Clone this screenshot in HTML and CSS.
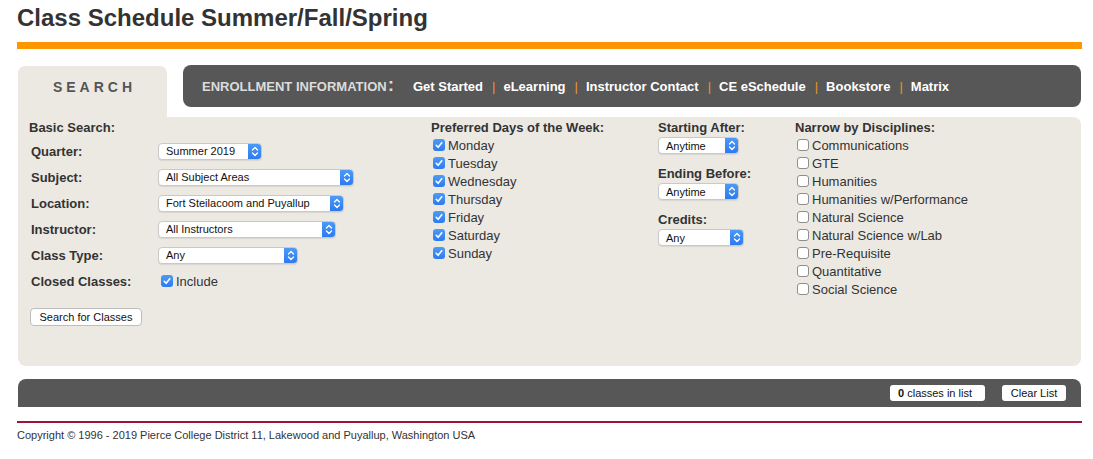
FILE: index.html
```html
<!DOCTYPE html>
<html lang="en">
<head>
<meta charset="utf-8">
<title>Class Schedule</title>
<link rel="stylesheet" href="styles.css">
</head>
<body>
<div class="page">
  <h1 class="title">Class Schedule Summer/Fall/Spring</h1>
  <div class="rule-orange"></div>

  <div class="tabs">
    <div class="tab-search">SEARCH</div>
    <nav class="enroll">
      <span class="enroll-label">ENROLLMENT INFORMATION<span class="colon">:</span></span>
      <a class="nav-link">Get Started</a><span class="sep">|</span>
      <a class="nav-link">eLearning</a><span class="sep">|</span>
      <a class="nav-link">Instructor Contact</a><span class="sep">|</span>
      <a class="nav-link">CE eSchedule</a><span class="sep">|</span>
      <a class="nav-link">Bookstore</a><span class="sep">|</span>
      <a class="nav-link">Matrix</a>
    </nav>
  </div>

  <div class="panel">
    <div class="col col-basic">
      <div class="heading heading-basic">Basic Search:</div>
      <div class="form-grid">
        <div class="label">Quarter:</div>
        <div class="select w-quarter"><span class="sel-text">Summer 2019</span><span class="stepper"><svg width="8" height="11" viewBox="0 0 8 11"><path d="M1.5 4 L4 1.5 L6.5 4 M1.5 7 L4 9.5 L6.5 7" fill="none" stroke="#fff" stroke-width="1.3" stroke-linecap="round" stroke-linejoin="round"/></svg></span></div>

        <div class="label">Subject:</div>
        <div class="select w-subject"><span class="sel-text">All Subject Areas</span><span class="stepper"><svg width="8" height="11" viewBox="0 0 8 11"><path d="M1.5 4 L4 1.5 L6.5 4 M1.5 7 L4 9.5 L6.5 7" fill="none" stroke="#fff" stroke-width="1.3" stroke-linecap="round" stroke-linejoin="round"/></svg></span></div>

        <div class="label">Location:</div>
        <div class="select w-location"><span class="sel-text">Fort Steilacoom and Puyallup</span><span class="stepper"><svg width="8" height="11" viewBox="0 0 8 11"><path d="M1.5 4 L4 1.5 L6.5 4 M1.5 7 L4 9.5 L6.5 7" fill="none" stroke="#fff" stroke-width="1.3" stroke-linecap="round" stroke-linejoin="round"/></svg></span></div>

        <div class="label">Instructor:</div>
        <div class="select w-instructor"><span class="sel-text">All Instructors</span><span class="stepper"><svg width="8" height="11" viewBox="0 0 8 11"><path d="M1.5 4 L4 1.5 L6.5 4 M1.5 7 L4 9.5 L6.5 7" fill="none" stroke="#fff" stroke-width="1.3" stroke-linecap="round" stroke-linejoin="round"/></svg></span></div>

        <div class="label">Class Type:</div>
        <div class="select w-type"><span class="sel-text">Any</span><span class="stepper"><svg width="8" height="11" viewBox="0 0 8 11"><path d="M1.5 4 L4 1.5 L6.5 4 M1.5 7 L4 9.5 L6.5 7" fill="none" stroke="#fff" stroke-width="1.3" stroke-linecap="round" stroke-linejoin="round"/></svg></span></div>

        <div class="label">Closed Classes:</div>
        <div class="check-row check-include"><span class="cb checked"><svg width="12" height="12" viewBox="0 0 12 12"><path d="M3.2 6.3 L5.1 8.3 L8.8 3.8" fill="none" stroke="#fff" stroke-width="1.6" stroke-linecap="round" stroke-linejoin="round"/></svg></span><span>Include</span></div>
      </div>
      <button class="btn-search">Search for Classes</button>
    </div>

    <div class="col col-days">
      <div class="heading">Preferred Days of the Week:</div>
      <div class="check-row"><span class="cb checked"><svg width="12" height="12" viewBox="0 0 12 12"><path d="M3.2 6.3 L5.1 8.3 L8.8 3.8" fill="none" stroke="#fff" stroke-width="1.6" stroke-linecap="round" stroke-linejoin="round"/></svg></span><span>Monday</span></div>
      <div class="check-row"><span class="cb checked"><svg width="12" height="12" viewBox="0 0 12 12"><path d="M3.2 6.3 L5.1 8.3 L8.8 3.8" fill="none" stroke="#fff" stroke-width="1.6" stroke-linecap="round" stroke-linejoin="round"/></svg></span><span>Tuesday</span></div>
      <div class="check-row"><span class="cb checked"><svg width="12" height="12" viewBox="0 0 12 12"><path d="M3.2 6.3 L5.1 8.3 L8.8 3.8" fill="none" stroke="#fff" stroke-width="1.6" stroke-linecap="round" stroke-linejoin="round"/></svg></span><span>Wednesday</span></div>
      <div class="check-row"><span class="cb checked"><svg width="12" height="12" viewBox="0 0 12 12"><path d="M3.2 6.3 L5.1 8.3 L8.8 3.8" fill="none" stroke="#fff" stroke-width="1.6" stroke-linecap="round" stroke-linejoin="round"/></svg></span><span>Thursday</span></div>
      <div class="check-row"><span class="cb checked"><svg width="12" height="12" viewBox="0 0 12 12"><path d="M3.2 6.3 L5.1 8.3 L8.8 3.8" fill="none" stroke="#fff" stroke-width="1.6" stroke-linecap="round" stroke-linejoin="round"/></svg></span><span>Friday</span></div>
      <div class="check-row"><span class="cb checked"><svg width="12" height="12" viewBox="0 0 12 12"><path d="M3.2 6.3 L5.1 8.3 L8.8 3.8" fill="none" stroke="#fff" stroke-width="1.6" stroke-linecap="round" stroke-linejoin="round"/></svg></span><span>Saturday</span></div>
      <div class="check-row"><span class="cb checked"><svg width="12" height="12" viewBox="0 0 12 12"><path d="M3.2 6.3 L5.1 8.3 L8.8 3.8" fill="none" stroke="#fff" stroke-width="1.6" stroke-linecap="round" stroke-linejoin="round"/></svg></span><span>Sunday</span></div>
    </div>

    <div class="col col-time">
      <div class="heading">Starting After:</div>
      <div class="select w-time"><span class="sel-text">Anytime</span><span class="stepper"><svg width="8" height="11" viewBox="0 0 8 11"><path d="M1.5 4 L4 1.5 L6.5 4 M1.5 7 L4 9.5 L6.5 7" fill="none" stroke="#fff" stroke-width="1.3" stroke-linecap="round" stroke-linejoin="round"/></svg></span></div>
      <div class="heading">Ending Before:</div>
      <div class="select w-time"><span class="sel-text">Anytime</span><span class="stepper"><svg width="8" height="11" viewBox="0 0 8 11"><path d="M1.5 4 L4 1.5 L6.5 4 M1.5 7 L4 9.5 L6.5 7" fill="none" stroke="#fff" stroke-width="1.3" stroke-linecap="round" stroke-linejoin="round"/></svg></span></div>
      <div class="heading">Credits:</div>
      <div class="select w-credits"><span class="sel-text">Any</span><span class="stepper"><svg width="8" height="11" viewBox="0 0 8 11"><path d="M1.5 4 L4 1.5 L6.5 4 M1.5 7 L4 9.5 L6.5 7" fill="none" stroke="#fff" stroke-width="1.3" stroke-linecap="round" stroke-linejoin="round"/></svg></span></div>
    </div>

    <div class="col col-disc">
      <div class="heading">Narrow by Disciplines:</div>
      <div class="check-row"><span class="cb"></span><span>Communications</span></div>
      <div class="check-row"><span class="cb"></span><span>GTE</span></div>
      <div class="check-row"><span class="cb"></span><span>Humanities</span></div>
      <div class="check-row"><span class="cb"></span><span>Humanities w/Performance</span></div>
      <div class="check-row"><span class="cb"></span><span>Natural Science</span></div>
      <div class="check-row"><span class="cb"></span><span>Natural Science w/Lab</span></div>
      <div class="check-row"><span class="cb"></span><span>Pre-Requisite</span></div>
      <div class="check-row"><span class="cb"></span><span>Quantitative</span></div>
      <div class="check-row"><span class="cb"></span><span>Social Science</span></div>
    </div>
  </div>

  <div class="listbar">
    <span class="pill pill-count"><b>0</b> classes in list</span>
    <span class="pill pill-clear">Clear List</span>
  </div>

  <div class="rule-red"></div>
  <p class="copyright">Copyright © 1996 - 2019 Pierce College District 11, Lakewood and Puyallup, Washington USA</p>
</div>
</body>
</html>
```

FILE: styles.css
```css
* { box-sizing: border-box; }

body {
  margin: 0;
  background: #fff;
  font-family: "Liberation Sans", Arial, sans-serif;
  color: #333;
}

.page {
  margin-left: 17px;
  width: 1065px;
}

.title {
  margin: 4px 0 0 0;
  font-size: 24px;
  line-height: 28px;
  font-weight: bold;
  color: #333;
}

.rule-orange {
  margin-top: 10px;
  height: 7px;
  background: #ff9600;
}

/* tabs row */
.tabs {
  display: flex;
  align-items: flex-start;
  margin-top: 16px;
  height: 52px;
}

.tab-search {
  margin: 1px 0 0 1px;
  width: 149px;
  height: 51px;
  background: #ece9e3;
  border-radius: 7px 7px 0 0;
  font-size: 14px;
  font-weight: bold;
  letter-spacing: 4px;
  padding-left: 4px;
  color: #555;
  text-align: center;
  line-height: 16px;
  padding-top: 13px;
}

.enroll {
  margin-left: 16px;
  width: 898px;
  height: 42px;
  background: #575757;
  border-radius: 8px;
  display: flex;
  align-items: center;
  padding-left: 19px;
  font-size: 13px;
  font-weight: bold;
}

.enroll-label {
  color: #dcdcdc;
  margin-right: 19px;
  display: flex;
  align-items: center;
}

.colon {
  font-size: 19px;
  line-height: 13px;
  margin-left: 1px;
  position: relative;
  top: -2px;
}

.nav-link {
  color: #fff;
}

.sep {
  color: #e8962a;
  font-weight: normal;
  margin: 0 8px 0 9px;
}

/* panel */
.panel {
  margin: 0 1px;
  height: 249px;
  background: #ece9e3;
  border-radius: 0 8px 8px 8px;
  padding: 3px 0 0 11px;
  display: grid;
  grid-template-columns: 402px 227px 137px 1fr;
  align-items: start;
}

.heading {
  font-size: 13px;
  font-weight: bold;
  line-height: 16px;
  color: #333;
}

.form-grid {
  margin-top: 2px;
  padding-left: 2px;
  display: grid;
  grid-template-columns: 127px auto;
  grid-auto-rows: 26px;
  align-items: center;
}

.label {
  font-size: 13px;
  font-weight: bold;
  color: #333;
}

.select {
  height: 17px;
  background: #fff;
  border: 1px solid #c9c9c9;
  border-radius: 4px;
  box-shadow: 0 1px 1px rgba(0,0,0,0.08);
  display: flex;
  align-items: center;
  justify-content: space-between;
  font-size: 11px;
  color: #111;
  overflow: hidden;
}

.sel-text {
  padding-left: 7px;
  white-space: nowrap;
}

.stepper {
  width: 14px;
  height: 17px;
  margin: -1px -1px -1px 0;
  background: linear-gradient(#4f9cf8, #2a78ee);
  border-radius: 0 4px 4px 0;
  display: flex;
  align-items: center;
  justify-content: center;
}

.w-quarter { width: 104px; }
.w-subject { width: 196px; }
.w-location { width: 186px; }
.w-instructor { width: 178px; }
.w-type { width: 140px; }
.w-time { width: 81px; }
.w-credits { width: 86px; }

.col-time .select {
  margin-top: 1px;
  margin-bottom: 12px;
}

.check-row {
  display: flex;
  align-items: center;
  height: 18px;
  font-size: 13px;
  color: #333;
  padding-left: 2px;
}

.check-include {
  padding-left: 3px;
}

.cb {
  width: 12px;
  height: 12px;
  border-radius: 3px;
  margin-right: 3px;
  background: #fff;
  border: 1px solid #8e8e8e;
  flex: none;
  display: flex;
}

.cb.checked {
  border: none;
  background: linear-gradient(#4d9bf8, #2c7bef);
}

.btn-search {
  margin: 14px 0 0 1px;
  height: 18px;
  width: 112px;
  padding: 0;
  background: #fff;
  border: 1px solid #bdbdbd;
  border-radius: 4px;
  font-family: "Liberation Sans", Arial, sans-serif;
  font-size: 11px;
  color: #111;
  display: block;
}

/* list bar */
.listbar {
  margin: 13px 1px 0 1px;
  height: 28px;
  background: #575757;
  border-radius: 8px 8px 0 0;
  display: flex;
  justify-content: flex-end;
  align-items: center;
  padding-right: 15px;
  gap: 17px;
}

.pill {
  height: 16px;
  background: #fff;
  border-radius: 3px;
  font-size: 11px;
  line-height: 16px;
  color: #111;
  padding: 0 8px;
}

.pill-count { width: 95px; }
.pill-clear { width: 64px; text-align: center; }

.rule-red {
  margin-top: 14px;
  height: 2px;
  background: #a1113a;
}

.copyright {
  margin: 6px 0 0 0;
  font-size: 11px;
  line-height: 13px;
  color: #333;
}
```
